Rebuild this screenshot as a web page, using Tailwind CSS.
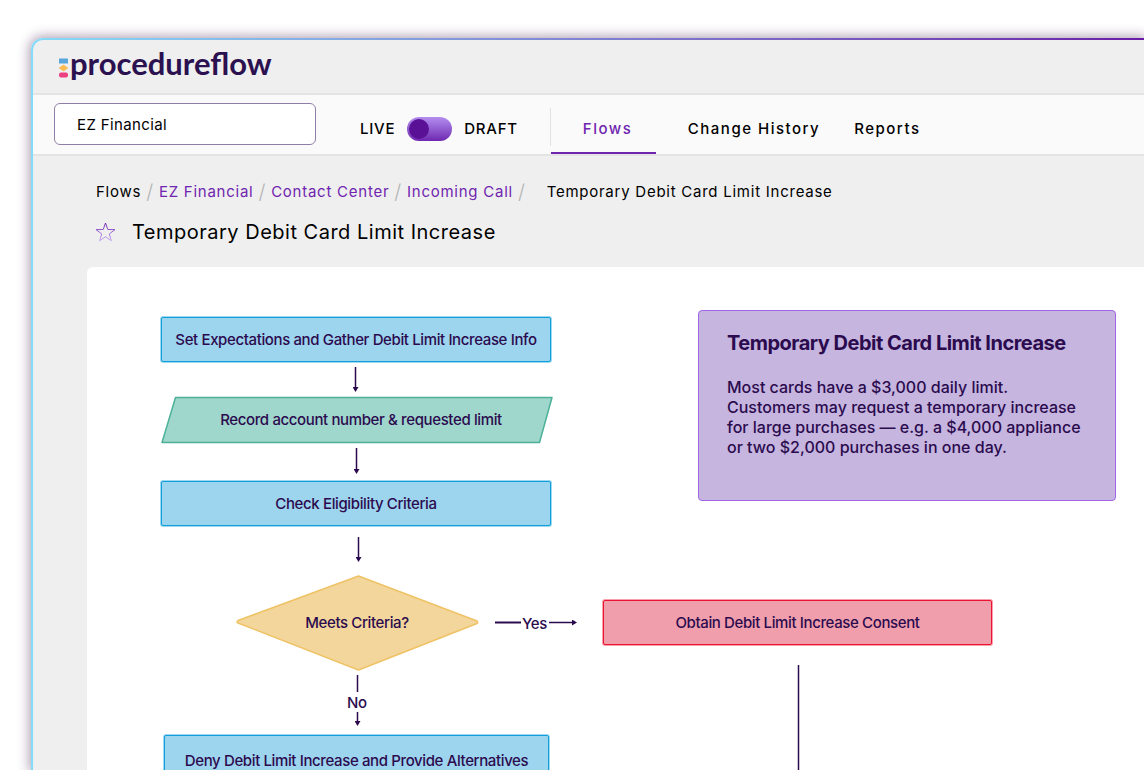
<!DOCTYPE html>
<html lang="en">

<head>
    <meta charset="UTF-8" />
    <meta name="viewport" content="width=device-width, initial-scale=1.0" />
    <title>Temporary Debit Card Limit Increase - procedureflow</title>
    <script src="https://cdn.jsdelivr.net/npm/@tailwindcss/browser@4"></script>
</head>

<body class="h-screen overflow-hidden bg-white pt-[38px] pl-[31px] font-['Inter',sans-serif] text-black">
    <!-- Window frame, runs off the right and bottom edges -->
    <div class="h-full rounded-tl-xl bg-linear-to-r from-[#84dcf8] to-[#6a1aa8] pt-[2px] pl-[2px] shadow-[0_0_12px_2px_rgba(60,20,70,0.4)]">
        <div class="flex h-full flex-col overflow-hidden rounded-tl-[10px] bg-[#efefef]">

            <header class="flex h-[55px] shrink-0 items-center border-b-2 border-[#e4e4e4] pl-[26px]">
                <a href="#" class="flex items-center gap-px">
                    <svg class="mt-[3px] h-5 w-[10px]" viewBox="0 0 10 20" aria-hidden="true">
                        <rect x="0" y="0.500" width="9" height="5" rx="0.5" fill="#58a6dc" />
                        <path d="M4.500 7L9 10L4.500 13L0 10Z" fill="#fdbb4d" stroke="#fdbb4d" stroke-width="0.500" stroke-linejoin="round" />
                        <rect x="0" y="14.500" width="9" height="5" rx="2" fill="#ee3f80" />
                    </svg>
                    <span class="pb-2 font-['Lato',sans-serif] text-[31px] leading-8 font-bold text-[#2b1150]">procedureflow</span>
                </a>
            </header>

            <nav class="flex h-[61px] shrink-0 items-stretch border-b-2 border-[#e4e4e4] bg-[#fafafa] pl-[21px] text-[15px]">
                <input type="text" aria-label="Organization" value="EZ Financial"
                    class="mt-2 h-[42px] w-[262px] rounded-md border border-[#8f7fa8] bg-white px-[22px] tracking-wide" />
                <div class="ml-11 flex items-center gap-3 pt-2 font-medium tracking-wider">
                    <label for="draft" class="pt-[2px]">LIVE</label>
                    <input type="checkbox" role="switch" id="draft" aria-label="Draft mode"
                        class="h-6 w-[45px] appearance-none rounded-full bg-linear-to-b from-[#b48df0] to-[#6f25b0] p-[2px] before:block before:size-5 before:rounded-full before:bg-[#5a1196]" />
                    <label for="draft" class="pt-[2px]">DRAFT</label>
                </div>
                <span class="mt-[13px] ml-8 h-[38px] w-px bg-[#e2e2e2]"></span>
                <div class="flex font-medium tracking-widest">
                    <a href="#" class="flex w-[105px] items-center border-b-2 border-[#6f25b0] pt-3 pl-8 text-[#6f25b0]">Flows</a>
                    <a href="#" class="ml-8 flex items-center pt-[10px]">Change History</a>
                    <a href="#" class="ml-[34px] flex items-center pt-[10px]">Reports</a>
                </div>
            </nav>

            <main class="flex min-h-0 flex-1 flex-col pl-[54px]">
                <div class="flex h-[66px] shrink-0 items-center gap-[5px] pt-[6px] pl-[9px] text-[15px] tracking-wider">
                    <a href="#">Flows</a>
                    <span class="text-xl font-light text-[#b4b4b4]">/</span>
                    <a href="#" class="text-[#6f25b0]">EZ Financial</a>
                    <span class="text-xl font-light text-[#b4b4b4]">/</span>
                    <a href="#" class="text-[#6f25b0]">Contact Center</a>
                    <span class="text-xl font-light text-[#b4b4b4]">/</span>
                    <a href="#" class="text-[#6f25b0]">Incoming Call</a>
                    <span class="text-xl font-light text-[#b4b4b4]">/</span>
                    <span class="ml-4">Temporary Debit Card Limit Increase</span>
                </div>
                <div class="flex h-[45px] shrink-0 items-start gap-4 pl-2">
                    <button type="button" aria-label="Add to favorites">
                        <svg class="h-5 w-[21px]" viewBox="0 0 21 20" fill="none">
                            <defs>
                                <linearGradient id="star" x1="0" y1="0" x2="0" y2="1">
                                    <stop offset="0" stop-color="#6f25b0" />
                                    <stop offset="1" stop-color="#c9a8f5" />
                                </linearGradient>
                            </defs>
                            <path d="M10.500 1L12.800 7.500L20 7.600L14.300 11.900L16.400 18.800L10.500 14.700L4.600 18.800L6.700 11.900L1 7.600L8.200 7.500Z" stroke="url(#star)" stroke-linejoin="round" />
                        </svg>
                    </button>
                    <h1 class="text-xl leading-5 tracking-wide">Temporary Debit Card Limit Increase</h1>
                </div>

                <!-- Flow canvas -->
                <section class="relative flex-1 overflow-hidden rounded-tl-md bg-white text-[15px] font-medium text-[#2b0b4e]">
                    <svg class="absolute top-0 left-0 h-[504px] w-[1058px]" viewBox="0 0 1058 504" fill="none" stroke="#2b0b4e" stroke-width="1.500" aria-hidden="true">
                        <defs>
                            <marker id="head" viewBox="0 0 5 6" refX="3" refY="3" markerWidth="5" markerHeight="6" markerUnits="userSpaceOnUse" orient="auto">
                                <path d="M0 0L5 3L0 6Z" fill="#2b0b4e" stroke="none" />
                            </marker>
                        </defs>
                        <path d="M88.500 130.500H465L452.500 175.500H75Z" fill="#9fd7cd" stroke="#4cb199" stroke-linejoin="round" />
                        <path d="M271.500 309L390 354Q391.500 355.500 390 356.500L271.500 403L151 356Q149 355 151 353.500Z" fill="#f3d69b" stroke="#efc265" stroke-linejoin="round" />
                        <path d="M268.500 100V123" marker-end="url(#head)" />
                        <path d="M269.500 181V205" marker-end="url(#head)" />
                        <path d="M271.500 270V293" marker-end="url(#head)" />
                        <path d="M270.500 408V425" />
                        <path d="M270.500 445V457" marker-end="url(#head)" />
                        <path d="M408 355.500H434" stroke-width="2" />
                        <path d="M462 355.500H488" marker-end="url(#head)" />
                        <path d="M711.500 398V504" />
                    </svg>

                    <div class="absolute top-[50px] left-[74px] flex h-[45px] w-[390px] items-center justify-center rounded-xs border border-[#119fdb] bg-[#9dd4ee] pt-px tracking-tight ring-1 ring-[#119fdb]/40">Set Expectations and Gather Debit Limit Increase Info</div>
                    <div class="absolute top-[130px] left-[74px] flex h-[46px] w-[400px] items-center justify-center pt-px tracking-tight">Record account number &amp; requested limit</div>
                    <div class="absolute top-[214px] left-[74px] flex h-[45px] w-[390px] items-center justify-center rounded-xs border border-[#119fdb] bg-[#9dd4ee] pt-px tracking-tight ring-1 ring-[#119fdb]/40">Check Eligibility Criteria</div>
                    <div class="absolute top-[308px] left-[149px] flex h-[95px] w-[242px] items-center justify-center pt-px tracking-tight">Meets Criteria?</div>
                    <div class="absolute top-[347px] left-[435px] leading-5 tracking-tight">Yes</div>
                    <div class="absolute top-[426px] left-[260px] leading-5 tracking-tight">No</div>
                    <div class="absolute top-[468px] left-[77px] flex h-[52px] w-[385px] items-center justify-center rounded-xs border border-[#119fdb] bg-[#9dd4ee] pt-px tracking-tight ring-1 ring-[#119fdb]/40">Deny Debit Limit Increase and Provide Alternatives</div>
                    <div class="absolute top-[333px] left-[516px] flex h-[45px] w-[389px] items-center justify-center rounded-xs border border-[#ea1430] bg-[#f19eac] pt-px tracking-tight ring-1 ring-[#ea1430]/40">Obtain Debit Limit Increase Consent</div>

                    <div class="absolute top-[43px] left-[611px] h-[191px] w-[418px] rounded-sm border border-[#a066e6] bg-[#c5b5df] px-7 pt-5">
                        <h2 class="text-xl leading-6 font-bold tracking-tight">Temporary Debit Card Limit Increase</h2>
                        <p class="mt-[22px] text-base leading-5">Most cards have a $3,000 daily limit.<br />Customers may request a temporary increase<br />for large purchases — e.g. a $4,000 appliance<br />or two $2,000 purchases in one day.</p>
                    </div>
                </section>
            </main>
        </div>
    </div>
</body>

</html>
